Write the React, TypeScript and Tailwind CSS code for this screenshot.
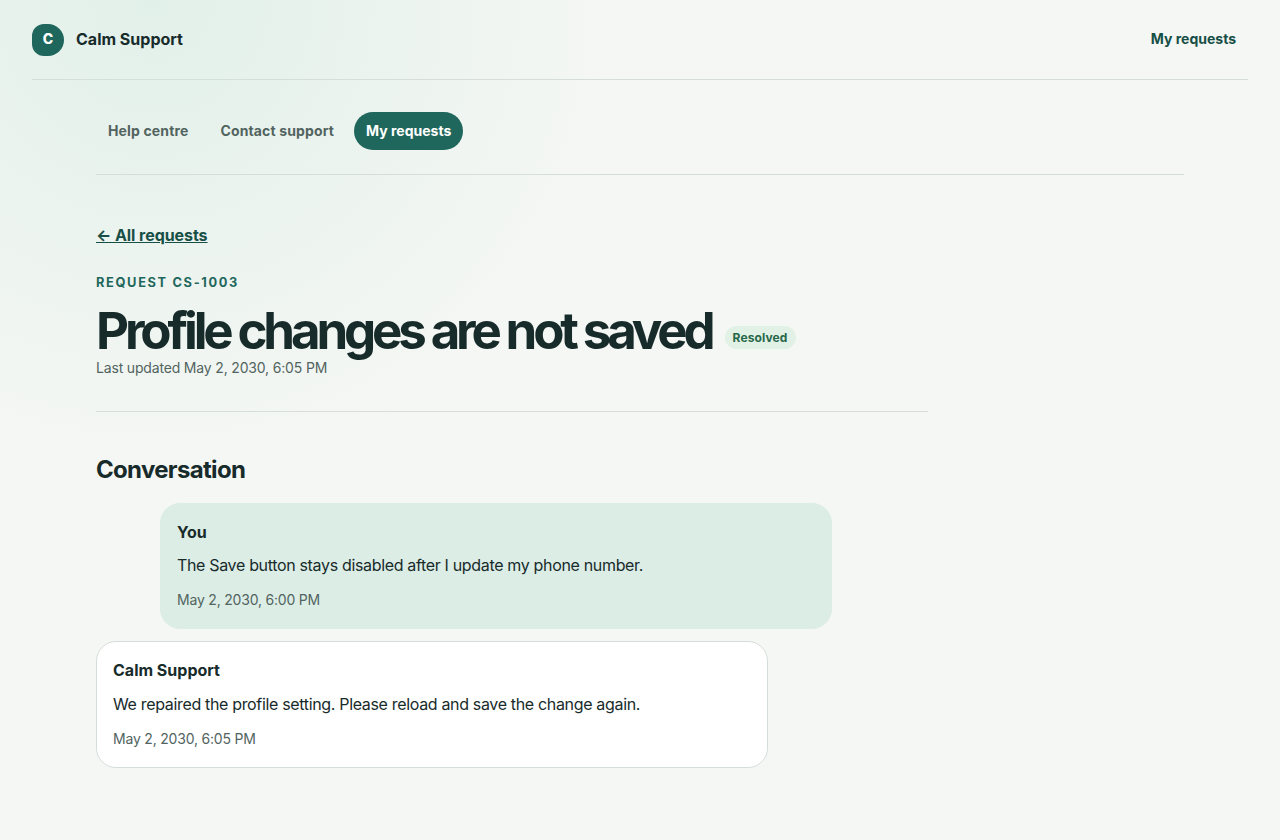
import React from 'react';
import { clsx } from 'clsx';

type Message = {
  id: string;
  author: string;
  body: string;
  time: string;
  own: boolean;
};

const TABS = [
  { label: 'Help centre', active: false },
  { label: 'Contact support', active: false },
  { label: 'My requests', active: true },
];

const MESSAGES: Message[] = [
  {
    id: 'm1',
    author: 'You',
    body: 'The Save button stays disabled after I update my phone number.',
    time: 'May 2, 2030, 6:00 PM',
    own: true,
  },
  {
    id: 'm2',
    author: 'Calm Support',
    body: 'We repaired the profile setting. Please reload and save the change again.',
    time: 'May 2, 2030, 6:05 PM',
    own: false,
  },
];

function Header() {
  return (
    <header className="mx-8 flex h-20 items-center justify-between border-b border-[#d5dedb]">
      <a href="#" className="flex items-center gap-3 font-bold">
        <span className="grid h-8 w-8 place-items-center rounded-[12px_16px_16px_12px] bg-[#1f675c] pb-0.5 text-sm font-extrabold text-white">
          C
        </span>
        <span className="pb-0.5">Calm Support</span>
      </a>
      <a href="#" className="px-3 pb-0.5 text-sm font-bold text-[#174f47]">
        My requests
      </a>
    </header>
  );
}

function Tabs() {
  return (
    <nav className="flex gap-2 border-b border-[#d5dedb] pb-6">
      {TABS.map((tab) => (
        <a
          key={tab.label}
          href="#"
          className={clsx(
            'flex h-[38px] items-center rounded-full px-3 text-sm font-bold',
            tab.active ? 'bg-[#1f675c] text-white' : 'tracking-[0.14px] text-[#52645f]'
          )}
        >
          {tab.label}
        </a>
      ))}
    </nav>
  );
}

function MessageCard({ message }: { message: Message }) {
  return (
    <article
      className={clsx(
        'w-[672px] rounded-[20px] border p-4',
        message.own ? 'ml-16 border-[#dcede6] bg-[#dcede6]' : 'border-[#d5dedb] bg-white'
      )}
    >
      <p className="leading-[25.6px] font-bold">{message.author}</p>
      <p className="mt-2 leading-[25.6px] tracking-[-0.335px]">{message.body}</p>
      <p className="mt-[10.6px] pb-[0.4px] text-sm leading-[22.4px] tracking-[-0.2px] text-[#52645f]">{message.time}</p>
    </article>
  );
}

export default function App() {
  return (
    <div className="min-h-screen bg-[#f5f7f4] bg-[radial-gradient(circle_at_12%_0,#e2f0ea_0,transparent_480px)] font-[Inter,sans-serif] text-[#182b2b]">
      <Header />

      <main className="mx-24 pt-8">
        <Tabs />

        <div className="w-[832px] pt-[47px]">
          <a href="#" className="block leading-[26px] font-bold tracking-[-0.06px] text-[#174f47] underline">
            ← All requests
          </a>

          {/* Request summary */}
          <section className="border-b border-[#d5dedb] pb-8">
            <p className="mt-[25px] text-[12.8px] leading-5 font-bold tracking-[1.66px] text-[#1f675c]">
              REQUEST CS-1003
            </p>
            <div className="mt-3 flex items-end gap-3">
              <h1 className="mr-px text-[51px] leading-[52px] font-bold tracking-[-4.15px]">
                Profile changes are not saved
              </h1>
              <span className="mb-2 rounded-full bg-[#e1f1e6] px-2 py-0.5 text-xs leading-[19px] font-bold tracking-[0.12px] text-[#276749]">
                Resolved
              </span>
            </div>
            <p className="text-sm leading-[22px] tracking-[-0.17px] text-[#52645f]">Last updated May 2, 2030, 6:05 PM</p>
          </section>

          {/* Conversation */}
          <section className="pt-10">
            <h2 className="text-2xl leading-9 font-bold tracking-[-0.68px]">Conversation</h2>
            <div className="mt-[14.6px] flex flex-col gap-3">
              {MESSAGES.map((message) => (
                <MessageCard key={message.id} message={message} />
              ))}
            </div>
          </section>
        </div>
      </main>
    </div>
  );
}
